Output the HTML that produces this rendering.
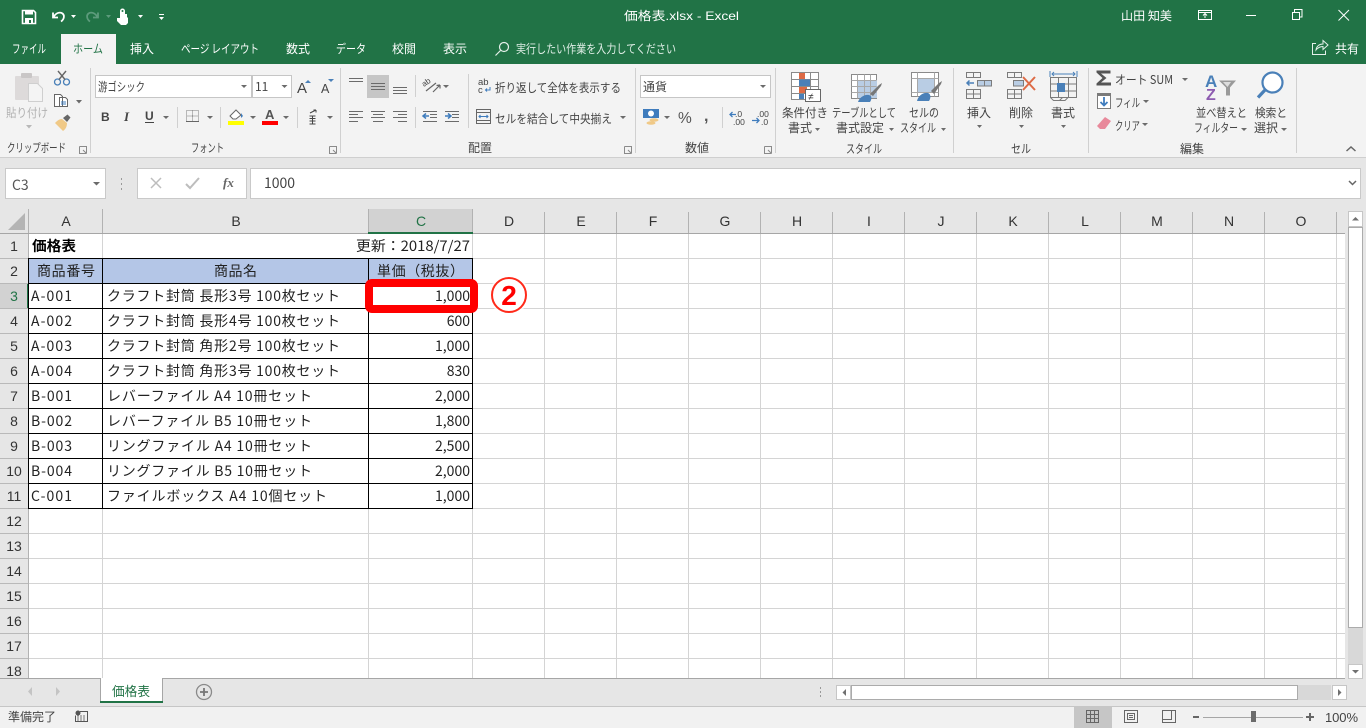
<!DOCTYPE html>
<html lang="ja"><head><meta charset="utf-8"><title>価格表.xlsx - Excel</title>
<style>
html,body{margin:0;padding:0;width:1366px;height:728px;overflow:hidden;background:#fff}
svg{display:block}
text{font-family:"Liberation Sans","Noto Sans CJK JP",sans-serif;font-size:12px;fill:#444}
.j{font-family:"Noto Sans CJK JP","Liberation Sans",sans-serif}
.w{fill:#fff}
.c{font-family:"Noto Sans CJK JP","Liberation Sans",sans-serif;font-size:14px;fill:#222}
.h{font-size:14px;fill:#333;text-anchor:middle}
.r{font-size:14px;fill:#333;text-anchor:middle}
.n{text-anchor:end}
.d{fill:#6b6b6b}
</style></head><body>
<svg width="1366" height="728" viewBox="0 0 1366 728" xmlns="http://www.w3.org/2000/svg">
<!-- backgrounds -->
<rect width="1366" height="64" fill="#217346"/>
<rect y="64" width="1366" height="93" fill="#f3f3f3"/>
<rect y="157" width="1366" height="52" fill="#e6e6e6"/>
<rect y="157" width="1366" height="1" fill="#cfcfcf"/>
<!-- QAT -->
<g>
<path d="M22.5 10.5h11l2 2v11h-13z" fill="none" stroke="#fff" stroke-width="1.6"/>
<rect x="25" y="10" width="8" height="4.5" fill="#fff"/><rect x="25" y="18" width="8" height="6" fill="#fff"/><rect x="29" y="20" width="2" height="3" fill="#217346"/>
<path d="M53 12.500v5h5M53.500 17c3-5 7-5 9-3.500 2.500 2 1.500 6-1.500 8" fill="none" stroke="#fff" stroke-width="1.800"/>
<path d="M71 15h5l-2.500 3z" fill="#fff"/>
<path d="M98 12.500v5h-5M97.500 17c-3-5-7-5-9-3.500-2.500 2-1.500 6 1.500 8" fill="none" stroke="#5d9b7c" stroke-width="1.800"/>
<path d="M106 15h5l-2.500 3z" fill="#5d9b7c"/>
<path d="M120 18v-7a2.500 2.500 0 0 1 5 0v3h2v3l1 1v5l-2 2h-5l-4-4v-3z" fill="#fff"/><circle cx="122.500" cy="11" r="1" fill="#217346"/>
<path d="M138 15h5l-2.500 3z" fill="#fff"/>
<rect x="159" y="14" width="5" height="1" fill="#fff"/><path d="M159 17h5l-2.500 3z" fill="#fff"/>
</g>
<text x="624" y="20" class="w" textLength="115" lengthAdjust="spacingAndGlyphs">価格表.xlsx  -  Excel</text>
<text x="1121" y="20" class="w j" textLength="51" lengthAdjust="spacingAndGlyphs">山田 知美</text>
<!-- window buttons -->
<path d="M1198.500 10.500h13v9h-13zM1198.500 12.500h13M1205 18v-4M1203 15.500l2-2 2 2" fill="none" stroke="#fff"/>
<rect x="1246" y="15" width="10" height="1" fill="#fff"/>
<path d="M1292.500 12.500h7v7h-7zM1294.500 12v-2.500h7.500v7.500h-2.500" fill="none" stroke="#fff"/>
<path d="M1338.500 10l10.500 10.500M1349 10l-10.500 10.500" stroke="#fff" fill="none"/>
<!-- tabs -->
<rect x="61" y="34" width="55" height="30" fill="#f3f3f3"/>
<text x="12" y="53" class="w j" textLength="34" lengthAdjust="spacingAndGlyphs">ファイル</text>
<text x="73" y="53" class="j" style="fill:#217346" textLength="30" lengthAdjust="spacingAndGlyphs">ホーム</text>
<text x="130" y="53" class="w j" textLength="24" lengthAdjust="spacingAndGlyphs">挿入</text>
<text x="181" y="53" class="w j" textLength="78" lengthAdjust="spacingAndGlyphs">ページ レイアウト</text>
<text x="286" y="53" class="w j" textLength="24" lengthAdjust="spacingAndGlyphs">数式</text>
<text x="336" y="53" class="w j" textLength="30" lengthAdjust="spacingAndGlyphs">データ</text>
<text x="392" y="53" class="w j" textLength="24" lengthAdjust="spacingAndGlyphs">校閲</text>
<text x="443" y="53" class="w j" textLength="24" lengthAdjust="spacingAndGlyphs">表示</text>
<circle cx="504" cy="47" r="4.500" fill="none" stroke="#e5f0ea" stroke-width="1.200"/><path d="M500.500 50.500l-5 5" fill="none" stroke="#e5f0ea" stroke-width="1.200"/>
<text x="516" y="53" class="j" style="fill:#dfeee6" textLength="160" lengthAdjust="spacingAndGlyphs">実行したい作業を入力してください</text>
<path d="M1316 43.500h-3.500v11h13v-4M1316 50c.5-4 3.500-6 7-6v-3.500l5 4.500-5 4.500v-3c-3 0-5 1-7 3.500z" fill="none" stroke="#e5f0ea"/>
<text x="1335" y="53" class="w j" textLength="24" lengthAdjust="spacingAndGlyphs">共有</text>
<!-- ribbon separators -->
<path d="M90.500 68v85M340.500 68v85M635.500 68v85M775.500 68v85M953.500 68v85M1088.500 68v85M1296.500 68v85M468.500 74v54M415.500 75v22M415.500 107v21M177.500 107v21M220.500 107v21M297.500 107v21M722.500 107v21" stroke="#d0d0d0" fill="none"/>
<!-- clipboard -->
<rect x="15" y="76" width="24" height="24" rx="1" fill="#dddada"/><rect x="21" y="73" width="11" height="5" rx="1" fill="#c9c6c6"/>
<path d="M28.500 83.500h9l5 5v13h-14z" fill="#f4f4f4" stroke="#cfcfcf"/>
<text x="6" y="117" class="j" style="fill:#b1b1b1" textLength="42" lengthAdjust="spacingAndGlyphs">貼り付け</text>
<path d="M26 125h6l-3 3.500z" fill="#b8b8b8"/>
<circle cx="57.500" cy="82" r="3" fill="none" stroke="#4a80b8" stroke-width="1.300"/><circle cx="66.500" cy="82" r="3" fill="none" stroke="#4a80b8" stroke-width="1.300"/>
<path d="M59 79.500L66 71M65 79.500L58 71" stroke="#666" stroke-width="1.400" fill="none"/>
<path d="M54.500 94.500h6l2 2v10h-8zM59.500 97.500h6l2 2v7h-8z" fill="#fff" stroke="#666"/><path d="M61 102h5M61 104h5" stroke="#3f7cbd" fill="none"/>
<path d="M76 100h6l-3 3.500z" class="d"/>
<path d="M55 123l8 8c3-2 4-5 4-8l-5-4c-3 0-5 2-7 4z" fill="#f0c987"/><path d="M63 118l4 4 3.500-4.500-3-3z" fill="#666"/>
<text x="7" y="152" class="j" textLength="59" lengthAdjust="spacingAndGlyphs">クリップボード</text>
<path d="M79.500 146.500h7v7M79.500 146.500v7h7M83 150l3 3" fill="none" stroke="#8a8a8a"/>
<!-- font group -->
<rect x="95.500" y="75.500" width="156" height="22" fill="#fff" stroke="#c6c6c6"/>
<rect x="252.500" y="75.500" width="39" height="22" fill="#fff" stroke="#c6c6c6"/>
<text x="98" y="91" class="j" textLength="47" lengthAdjust="spacingAndGlyphs">游ゴシック</text>
<text x="255" y="91" class="j">11</text>
<path d="M241 85h6l-3 3z" class="d"/><path d="M281.500 85h6l-3 3z" class="d"/>
<text x="297" y="93" style="font-size:15px">A</text><path d="M305 83h6l-3-3z" fill="#4a80b8"/>
<text x="321" y="93" style="font-size:12.500px">A</text><path d="M328 79h6l-3 3z" fill="#4a80b8"/>
<text x="101" y="121" style="font-size:12px;font-weight:bold">B</text>
<text x="124" y="121" style="font-family:'Liberation Serif';font-style:italic;font-size:13px;font-weight:bold">I</text>
<text x="145" y="120" style="font-size:12px;font-weight:bold">U</text><rect x="145" y="122" width="9" height="1" fill="#444"/>
<path d="M163 116h6l-3 3z" class="d"/>
<path d="M186.500 110.500h12v11h-12zM192.500 110.500v11M186.500 116h12" fill="none" stroke="#7b7b7b" stroke-dasharray="1 1"/><path d="M186 121.500h13" stroke="#666"/>
<path d="M207 116h6l-3 3z" class="d"/>
<path d="M230 116l6-6 5 5-5 4h-3z" fill="#fff" stroke="#666"/><path d="M241 113l2 3-2 2z" fill="#3f7cbd"/>
<rect x="228" y="121" width="16" height="4" fill="#ffff00"/>
<path d="M250 116h6l-3 3z" class="d"/>
<text x="265" y="119" style="font-size:13px;font-weight:bold;fill:#555">A</text><rect x="262" y="121" width="16" height="4" fill="#ff0000"/>
<path d="M283 116h6l-3 3z" class="d"/>
<path d="M310 113l6-3M316 110h-2.500M316 110v2.500M309.500 116h6M309.500 118.500h6M309.500 121h6M309.500 124h6M312.500 116v8" stroke="#444" fill="none"/>
<path d="M327 116h6l-3 3z" class="d"/>
<text x="191" y="152" class="j" textLength="33" lengthAdjust="spacingAndGlyphs">フォント</text>
<path d="M329.500 146.500h7v7M329.500 146.500v7h7M333 150l3 3" fill="none" stroke="#8a8a8a"/>
<!-- alignment -->
<rect x="367" y="75" width="22" height="23" fill="#c6c6c6"/>
<path d="M349 78.500h14M349 81.500h14M371 83.500h14M371 86.500h14M371 89.500h14M393 87.500h14M393 90.500h14M393 93.500h14" stroke="#6b6b6b" fill="none"/>
<path d="M349 111.500h14M349 114.500h9M349 117.500h14M349 121.500h9M371 111.500h14M373 114.500h10M371 117.500h14M373 121.500h10M393 111.500h14M398 114.500h9M393 117.500h14M398 121.500h9" stroke="#6b6b6b" fill="none"/>
<path d="M426 91l10-8M433 92l7-7M440 85l-3.500 .5M440 85v3.500" stroke="#666" fill="none" stroke-width="1.200"/><text x="424" y="87" style="font-size:8px" transform="rotate(-35 424 87)">ab</text>
<path d="M443 85h6l-3 3z" class="d"/>
<path d="M423 111.500h14M430 114.500h7M430 117.500h7M423 121.500h14M445 111.500h14M452 114.500h7M452 117.500h7M445 121.500h14" stroke="#6b6b6b" fill="none"/>
<path d="M423 116h6M426 113.500l-3 2.500 3 2.500" stroke="#3f7cbd" fill="none" stroke-width="1.500"/>
<path d="M445 116h6M448 113.500l3 2.500-3 2.500" stroke="#3f7cbd" fill="none" stroke-width="1.500"/>
<text x="478" y="85" style="font-size:9.500px">ab</text><text x="478" y="93" style="font-size:9.500px">c</text><path d="M490 87v3h-4M487 88.500l-1.500 1.500 1.500 1.500" stroke="#3f7cbd" fill="none"/>
<text x="495" y="92" class="j" textLength="126" lengthAdjust="spacingAndGlyphs">折り返して全体を表示する</text>
<path d="M476.500 109.500h14v14h-14zM476.500 112.500h14M476.500 120.500h14" fill="none" stroke="#666"/><path d="M479 116.500h9M480.500 115l-1.500 1.500 1.500 1.500M486.500 115l1.500 1.500-1.500 1.500" stroke="#3f7cbd" fill="none"/>
<text x="495" y="123" class="j" textLength="117" lengthAdjust="spacingAndGlyphs">セルを結合して中央揃え</text>
<path d="M620 116h6l-3 3z" class="d"/>
<text x="468" y="152" class="j" textLength="24" lengthAdjust="spacingAndGlyphs">配置</text>
<path d="M624.500 146.500h7v7M624.500 146.500v7h7M628 150l3 3" fill="none" stroke="#8a8a8a"/>
<!-- number -->
<rect x="640.500" y="75.500" width="130" height="22" fill="#fff" stroke="#c6c6c6"/>
<text x="643" y="91" class="j" textLength="24" lengthAdjust="spacingAndGlyphs">通貨</text>
<path d="M760 85h6l-3 3z" class="d"/>
<rect x="643" y="109" width="16" height="9" fill="#3f7cbd"/><circle cx="651" cy="113.500" r="3" fill="#fff"/>
<ellipse cx="654" cy="120" rx="4.500" ry="1.800" fill="#f0c987"/><ellipse cx="651" cy="123" rx="4.500" ry="1.800" fill="#f0c987"/>
<path d="M664 116h6l-3 3z" class="d"/>
<text x="678" y="123" style="font-size:15.500px;fill:#555">%</text>
<text x="704" y="121" style="font-size:16px;font-weight:bold;fill:#555">,</text>
<text x="735" y="117" style="font-size:8.500px">.0</text><text x="733" y="125" style="font-size:8.500px">.00</text>
<path d="M730 114.500h6M732.500 112l-2.500 2.500 2.500 2.500" stroke="#3f7cbd" fill="none" stroke-width="1.300"/>
<text x="757" y="117" style="font-size:8.500px">.00</text><text x="761" y="125" style="font-size:8.500px">.0</text>
<path d="M752 120.500h7M756.500 118l2.500 2.500-2.500 2.500" stroke="#3f7cbd" fill="none" stroke-width="1.300"/>
<text x="685" y="152" class="j" textLength="24" lengthAdjust="spacingAndGlyphs">数値</text>
<path d="M764.500 146.500h7v7M764.500 146.500v7h7M768 150l3 3" fill="none" stroke="#8a8a8a"/>
<!-- styles -->
<g>
<path d="M791.500 72.500h27v27h-27zM791.500 79.500h27M791.500 86.500h27M791.500 93.500h27M799.500 72.500v27M810.500 72.500v27" fill="#fff" stroke="#8a8a8a"/>
<rect x="799" y="73" width="6" height="6" fill="#dd6a45"/><rect x="799" y="79.500" width="11" height="6.500" fill="#4a80b8"/><rect x="799" y="87" width="8" height="6" fill="#dd6a45"/><rect x="799" y="94" width="5" height="5" fill="#4a80b8"/>
<rect x="805.500" y="89.500" width="15" height="12" fill="#fff" stroke="#666"/>
<text x="808" y="100" style="font-size:10px;fill:#333">≠</text>
</g>
<text x="782" y="117" class="j" textLength="46" lengthAdjust="spacingAndGlyphs">条件付き</text>
<text x="788" y="132" class="j" textLength="24" lengthAdjust="spacingAndGlyphs">書式</text>
<path d="M815 128h5l-2.500 3z" class="d"/>
<g>
<path d="M851.500 74.500h25v24h-25z" fill="#fff" stroke="#8a8a8a"/><rect x="857" y="80" width="20" height="18" fill="#b9cde4"/>
<path d="M851.500 80.500h25M851.500 86.500h25M851.500 92.500h25M857.500 74.500v24M864.500 74.500v24M870.500 74.500v24" stroke="#a8a8a8" fill="none"/>
<path d="M870 94l9-9 3-2-1 3-8 10z" fill="#777"/><path d="M858 102c1-4 6-8 11-7 3 1 3 4 1 7z" fill="#4a80b8"/>
</g>
<text x="832" y="117" class="j" textLength="64" lengthAdjust="spacingAndGlyphs">テーブルとして</text>
<text x="836" y="132" class="j" textLength="48" lengthAdjust="spacingAndGlyphs">書式設定</text>
<path d="M889 128h5l-2.500 3z" class="d"/>
<g>
<path d="M911.500 72.500h27v24h-27z" fill="#fff" stroke="#8a8a8a"/><rect x="917" y="78" width="17" height="14" fill="#b9cde4"/>
<path d="M911.500 78.500h27M911.500 92.500h27M917.500 72.500v24M934.500 72.500v24" stroke="#a8a8a8" fill="none"/>
<path d="M931 91l8-8 3-2-1 3-7 10z" fill="#777"/><path d="M917 101c1-5 6-9 11-8 3 1 3 5 1 8z" fill="#4a80b8"/>
</g>
<text x="909" y="117" class="j" textLength="30" lengthAdjust="spacingAndGlyphs">セルの</text>
<text x="900" y="132" class="j" textLength="36" lengthAdjust="spacingAndGlyphs">スタイル</text>
<path d="M941 128h5l-2.500 3z" class="d"/>
<text x="846" y="153" class="j" textLength="36" lengthAdjust="spacingAndGlyphs">スタイル</text>
<!-- cells -->
<g fill="none" stroke="#7b7b7b">
<path d="M966.500 72.500h14v5h-14zM973.500 72.500v5M966.500 89.500h14v9h-14zM973.500 89.500v9M966.500 94h14"/>
<rect x="977.500" y="80.500" width="14" height="5.500" fill="#b9cde4"/><path d="M984.500 80.500v5.500"/>
<path d="M967 83h7M969.500 80.500l-2.500 2.500 2.500 2.500" stroke="#4a80b8" stroke-width="1.500"/>
<path d="M1007.500 72.500h14v5h-14zM1014.500 72.500v5M1007.500 89.500h14v9h-14zM1014.500 89.500v9M1007.500 94h14"/>
<rect x="1013.500" y="80.500" width="10" height="5.500" fill="#b9cde4"/>
<path d="M1023 77l12 13M1035 77l-12 13" stroke="#dd6a45" stroke-width="2"/>
<path d="M1050.500 77.500h26v20h-26zM1050.500 84h26M1050.500 91h26M1058.500 77.500v20M1068.500 77.500v20"/>
<path d="M1050.500 97.500l3 3h6l3-3M1060 100.500h5l3-3"/>
<path d="M1050 71v6M1077 71v6M1052 74h23M1054 72l-2 2 2 2M1073 72l2 2-2 2" stroke="#4a80b8"/>
</g>
<rect x="1057" y="83" width="8" height="9" fill="#4a80b8"/>
<text x="967" y="117" class="j" textLength="24" lengthAdjust="spacingAndGlyphs">挿入</text>
<text x="1009" y="117" class="j" textLength="24" lengthAdjust="spacingAndGlyphs">削除</text>
<text x="1051" y="117" class="j" textLength="24" lengthAdjust="spacingAndGlyphs">書式</text>
<path d="M977 125h5l-2.500 3zM1019 125h5l-2.500 3zM1061 125h5l-2.500 3z" class="d"/>
<text x="1011" y="153" class="j" textLength="20" lengthAdjust="spacingAndGlyphs">セル</text>
<!-- editing -->
<path d="M1096.500 70.500h14v3h-9.500l5.500 4.500-5.500 4.500h10v3h-14.500v-2l6-5.500-6-5.500z" fill="#555"/>
<text x="1115" y="84" class="j" textLength="58" lengthAdjust="spacingAndGlyphs">オート SUM</text>
<path d="M1182 78h6l-3 3z" class="d"/>
<rect x="1097.500" y="93.500" width="13" height="15" fill="#fff" stroke="#7b7b7b"/><rect x="1097" y="93" width="14" height="3" fill="#7b7b7b"/>
<path d="M1104 97v8M1100.500 102l3.500 3.500 3.500-3.500" stroke="#3f7cbd" fill="none" stroke-width="1.800"/>
<text x="1115" y="107" class="j" textLength="25" lengthAdjust="spacingAndGlyphs">フィル</text>
<path d="M1143 100h6l-3 3z" class="d"/>
<path d="M1097 126l8-9 6 4-6 8h-5z" fill="#e8899b"/>
<text x="1115" y="130" class="j" textLength="25" lengthAdjust="spacingAndGlyphs">クリア</text>
<path d="M1142 123h6l-3 3z" class="d"/>
<text x="1205" y="87" style="font-size:17px;font-weight:bold;fill:#4a80b8">A</text>
<text x="1206" y="100" style="font-size:16px;font-weight:bold;fill:#8d5bb0">Z</text>
<path d="M1219 80.500h17l-6 7v8l-4 0v-8z" fill="#9a9a9a"/><path d="M1223 82h8l-3.500 5z" fill="#ddd"/>
<text x="1196" y="117" class="j" textLength="51" lengthAdjust="spacingAndGlyphs">並べ替えと</text>
<text x="1194" y="132" class="j" textLength="44" lengthAdjust="spacingAndGlyphs">フィルター</text>
<path d="M1241 128h6l-3 3z" class="d"/>
<circle cx="1272.500" cy="82.500" r="10" fill="#fff" stroke="#4a80b8" stroke-width="2.200"/><path d="M1265 90l-7 7.500" stroke="#4a80b8" stroke-width="3.200" fill="none"/>
<text x="1255" y="117" class="j" textLength="32" lengthAdjust="spacingAndGlyphs">検索と</text>
<text x="1254" y="132" class="j" textLength="24" lengthAdjust="spacingAndGlyphs">選択</text>
<path d="M1281 128h6l-3 3z" class="d"/>
<text x="1180" y="153" class="j" textLength="24" lengthAdjust="spacingAndGlyphs">編集</text>
<path d="M1346.500 151l4.500-4 4.500 4" fill="none" stroke="#666" stroke-width="1.500"/>
<!-- formula bar -->
<rect x="5.500" y="168.500" width="100" height="30" fill="#fff" stroke="#c9c9c9"/>
<text x="12" y="190" class="j" style="font-size:14px;fill:#555">C3</text>
<path d="M93 182h7l-3.500 3.500z" class="d"/>
<path d="M121.500 178v2M121.500 183v2M121.500 188v2" stroke="#999" fill="none"/>
<rect x="137.500" y="168.500" width="109" height="30" fill="#fff" stroke="#c9c9c9"/>
<rect x="250.500" y="168.500" width="1110" height="30" fill="#fff" stroke="#c9c9c9"/>
<path d="M151 178l10 10M161 178l-10 10" stroke="#bdbdbd" stroke-width="1.500" fill="none"/>
<path d="M186 184l4 4 9-10" stroke="#bdbdbd" stroke-width="2" fill="none"/>
<text x="223" y="187" style="font-family:'Liberation Serif';font-style:italic;font-weight:bold;font-size:13px;fill:#666">fx</text>
<text x="264" y="188" class="j" style="font-size:14px">1000</text>
<path d="M1349 181l3.500 3.500 3.500-3.500" stroke="#666" stroke-width="1.500" fill="none"/>
<!-- sheet background -->
<rect x="0" y="209" width="1366" height="25" fill="#e6e6e6"/>
<rect x="0" y="209" width="28" height="470" fill="#e6e6e6"/>
<rect x="1345" y="209" width="21" height="470" fill="#e6e6e6"/>
<rect x="368" y="209" width="105" height="24" fill="#d2d2d2"/>
<rect x="0" y="284" width="28" height="24" fill="#d2d2d2"/>
<rect x="103" y="259" width="265" height="24" fill="#b4c6e7"/><rect x="29" y="259" width="73" height="24" fill="#b4c6e7"/><rect x="369" y="259" width="103" height="24" fill="#b4c6e7"/>
<!-- gridlines -->
<path d="M102.500 234v25M102.500 508v170M368.500 508v170M472.500 234v444M544.500 234v444M616.500 234v444M688.500 234v444M760.500 234v444M832.500 234v444M904.500 234v444M976.500 234v444M1048.500 234v444M1120.500 234v444M1192.500 234v444M1264.500 234v444M1336.500 234v444" stroke="#d4d4d4" fill="none"/>
<path d="M472 258.500h873M472 283.500h873M472 308.500h873M472 333.500h873M472 358.500h873M472 383.500h873M472 408.500h873M472 433.500h873M472 458.500h873M472 483.500h873M472 508.500h873M29 533.500h1316M29 558.500h1316M29 583.500h1316M29 608.500h1316M29 633.500h1316M29 658.500h1316" stroke="#d4d4d4" fill="none"/>
<!-- header separators -->
<path d="M28.500 209v470M102.500 209v24M368.500 209v24M472.500 209v24M544.500 212v21M616.500 212v21M688.500 212v21M760.500 212v21M832.500 212v21M904.500 212v21M976.500 212v21M1048.500 212v21M1120.500 212v21M1192.500 212v21M1264.500 212v21M1336.500 212v21" stroke="#b2b2b2" fill="none"/>
<path d="M0 258.500h28M0 283.500h28M0 308.500h28M0 333.500h28M0 358.500h28M0 383.500h28M0 408.500h28M0 433.500h28M0 458.500h28M0 483.500h28M0 508.500h28M0 533.500h28M0 558.500h28M0 583.500h28M0 608.500h28M0 633.500h28M0 658.500h28" stroke="#b9b9b9" fill="none"/>
<path d="M0 233.500h1345" stroke="#a6a6a6" fill="none"/>
<rect x="368" y="232" width="105" height="2" fill="#217346"/>
<rect x="27" y="284" width="2" height="24" fill="#217346"/>
<path d="M25 213v17H8z" fill="#b4b4b4"/>
<!-- column letters -->
<g>
<text x="66" y="226" class="h">A</text><text x="236" y="226" class="h">B</text><text x="421" y="226" class="h" style="fill:#217346">C</text><text x="509" y="226" class="h">D</text><text x="581" y="226" class="h">E</text><text x="653" y="226" class="h">F</text><text x="725" y="226" class="h">G</text><text x="797" y="226" class="h">H</text><text x="869" y="226" class="h">I</text><text x="941" y="226" class="h">J</text><text x="1013" y="226" class="h">K</text><text x="1085" y="226" class="h">L</text><text x="1157" y="226" class="h">M</text><text x="1229" y="226" class="h">N</text><text x="1301" y="226" class="h">O</text>
</g>
<!-- row numbers -->
<g>
<text x="14" y="251" class="r">1</text><text x="14" y="276" class="r">2</text><text x="14" y="301" class="r" style="fill:#217346">3</text><text x="14" y="326" class="r">4</text><text x="14" y="351" class="r">5</text><text x="14" y="376" class="r">6</text><text x="14" y="401" class="r">7</text><text x="14" y="426" class="r">8</text><text x="14" y="451" class="r">9</text><text x="14" y="476" class="r">10</text><text x="14" y="501" class="r">11</text><text x="14" y="526" class="r">12</text><text x="14" y="551" class="r">13</text><text x="14" y="576" class="r">14</text><text x="14" y="601" class="r">15</text><text x="14" y="626" class="r">16</text><text x="14" y="651" class="r">17</text><text x="14" y="676" class="r">18</text>
</g>
<!-- table borders -->
<path d="M28.500 258v251M102.500 258v251M368.500 258v251M472.500 258v251M28 258.500h445M28 283.500h445M28 308.500h445M28 333.500h445M28 358.500h445M28 383.500h445M28 408.500h445M28 433.500h445M28 458.500h445M28 483.500h445M28 508.500h445" stroke="#000" fill="none"/>
<!-- cell text -->
<text x="32" y="251" class="c" style="font-weight:bold;fill:#000" textLength="44" lengthAdjust="spacingAndGlyphs">価格表</text>
<text x="356" y="251" class="c" textLength="114" lengthAdjust="spacingAndGlyphs">更新：2018/7/27</text>
<text x="37" y="276" class="c" textLength="58" lengthAdjust="spacing">商品番号</text>
<text x="214" y="276" class="c" textLength="43" lengthAdjust="spacing">商品名</text>
<text x="377" y="276" class="c" textLength="87" lengthAdjust="spacing">単価（税抜）</text>
<g>
<text x="31" y="301" class="c" textLength="41" lengthAdjust="spacing">A-001</text><text x="31" y="326" class="c" textLength="41" lengthAdjust="spacing">A-002</text><text x="31" y="351" class="c" textLength="41" lengthAdjust="spacing">A-003</text><text x="31" y="376" class="c" textLength="41" lengthAdjust="spacing">A-004</text><text x="31" y="401" class="c" textLength="41" lengthAdjust="spacing">B-001</text><text x="31" y="426" class="c" textLength="41" lengthAdjust="spacing">B-002</text><text x="31" y="451" class="c" textLength="41" lengthAdjust="spacing">B-003</text><text x="31" y="476" class="c" textLength="41" lengthAdjust="spacing">B-004</text><text x="31" y="501" class="c" textLength="41" lengthAdjust="spacing">C-001</text>
<text x="107" y="301" class="c" textLength="233" lengthAdjust="spacing">クラフト封筒 長形3号 100枚セット</text>
<text x="107" y="326" class="c" textLength="233" lengthAdjust="spacing">クラフト封筒 長形4号 100枚セット</text>
<text x="107" y="351" class="c" textLength="233" lengthAdjust="spacing">クラフト封筒 角形2号 100枚セット</text>
<text x="107" y="376" class="c" textLength="233" lengthAdjust="spacing">クラフト封筒 角形3号 100枚セット</text>
<text x="107" y="401" class="c" textLength="205" lengthAdjust="spacing">レバーファイル A4 10冊セット</text>
<text x="107" y="426" class="c" textLength="205" lengthAdjust="spacing">レバーファイル B5 10冊セット</text>
<text x="107" y="451" class="c" textLength="205" lengthAdjust="spacing">リングファイル A4 10冊セット</text>
<text x="107" y="476" class="c" textLength="205" lengthAdjust="spacing">リングファイル B5 10冊セット</text>
<text x="107" y="501" class="c" textLength="220" lengthAdjust="spacing">ファイルボックス A4 10個セット</text>
<text x="470" y="301" class="c n">1,000</text><text x="470" y="326" class="c n">600</text><text x="470" y="351" class="c n">1,000</text><text x="470" y="376" class="c n">830</text><text x="470" y="401" class="c n">2,000</text><text x="470" y="426" class="c n">1,800</text><text x="470" y="451" class="c n">2,500</text><text x="470" y="476" class="c n">2,000</text><text x="470" y="501" class="c n">1,000</text>
</g>
<!-- annotation -->
<rect x="369" y="283" width="105" height="26" rx="3" fill="none" stroke="#ff0000" stroke-width="8"/>
<circle cx="509" cy="295" r="20" fill="#fff" opacity=".7"/>
<circle cx="509" cy="295" r="17" fill="#fff" stroke="#ff2a1a" stroke-width="2"/>
<text x="509" y="305" text-anchor="middle" style="font-size:28px;font-weight:bold;fill:#ff0000">2</text>
<!-- vertical scrollbar -->
<rect x="1348" y="227" width="15" height="437" fill="#d8d8d8"/>
<rect x="1348.500" y="227.500" width="14" height="400" fill="#fff" stroke="#ababab"/>
<rect x="1348.500" y="211.500" width="14" height="15" fill="#fff" stroke="#c6c6c6"/>
<path d="M1352 220.500h7l-3.500-3.500z" fill="#707070"/>
<rect x="1348.500" y="664.500" width="14" height="14" fill="#fff" stroke="#c6c6c6"/>
<path d="M1352 670h7l-3.500 3.500z" fill="#707070"/>
<!-- sheet bar -->
<rect y="679" width="1366" height="27" fill="#e6e6e6"/>
<rect y="678" width="1345" height="1" fill="#a6a6a6"/>
<path d="M32 687v9l-4-4.500zM56 687v9l4-4.500z" fill="#c4c4c4"/>
<path d="M100.500 678.500V702M162.500 678.500V702" stroke="#a6a6a6" fill="none"/>
<rect x="101" y="678" width="61" height="23" fill="#fff"/>
<rect x="100" y="701" width="63" height="2" fill="#217346"/>
<text x="112" y="696" class="j" style="fill:#217346;font-size:13px" textLength="38" lengthAdjust="spacingAndGlyphs">価格表</text>
<circle cx="204" cy="692" r="7.500" fill="none" stroke="#8a8a8a" stroke-width="1.300"/><path d="M200 692h8M204 688v8" stroke="#777" stroke-width="1.800" fill="none"/>
<path d="M820.500 687v2M820.500 691v2M820.500 695v2" stroke="#999" fill="none"/>
<!-- horizontal scrollbar -->
<rect x="851" y="685" width="480" height="15" fill="#d8d8d8"/>
<rect x="851.500" y="685.500" width="446" height="14" fill="#fff" stroke="#ababab"/>
<rect x="836.500" y="685.500" width="14" height="14" fill="#fff" stroke="#c6c6c6"/>
<path d="M846 689v7l-3.500-3.500z" fill="#707070"/>
<rect x="1332.500" y="685.500" width="14" height="14" fill="#fff" stroke="#c6c6c6"/>
<path d="M1338 689v7l3.500-3.500z" fill="#707070"/>
<!-- status bar -->
<rect y="706" width="1366" height="22" fill="#f1f1f1"/>
<rect y="706" width="1366" height="1" fill="#c6c6c6"/>
<text x="8" y="721" class="j" textLength="48" lengthAdjust="spacingAndGlyphs">準備完了</text>
<circle cx="78" cy="713" r="2.500" fill="#555"/><path d="M80 711.500h7.500v10h-12v-6" fill="none" stroke="#555"/><path d="M77 716h9M77 718h9M77 720h9" stroke="#777" stroke-dasharray="2 1" fill="none"/>
<rect x="1074" y="707" width="38" height="21" fill="#c6c6c6"/>
<path d="M1086.500 710.500h12v12h-12zM1086.500 714.500h12M1086.500 718.500h12M1090.500 710.500v12M1094.500 710.500v12" fill="none" stroke="#666"/>
<path d="M1124.500 710.500h13v12h-13zM1127.500 713.500h7v6h-7zM1129 715.500h4M1129 717.500h4" fill="none" stroke="#666"/>
<path d="M1162.500 710.500h13v12h-13zM1162.500 719.500h9v-9" fill="none" stroke="#666"/>
<rect x="1193" y="716" width="6" height="2" fill="#666"/>
<rect x="1203" y="717" width="100" height="1" fill="#a6a6a6"/>
<rect x="1251" y="711" width="5" height="11" fill="#6b6b6b"/>
<path d="M1306 717h8M1310 713v8" stroke="#666" stroke-width="2" fill="none"/>
<text x="1325" y="722" style="font-size:13px" textLength="33" lengthAdjust="spacing">100%</text>
</svg>
</body></html>
